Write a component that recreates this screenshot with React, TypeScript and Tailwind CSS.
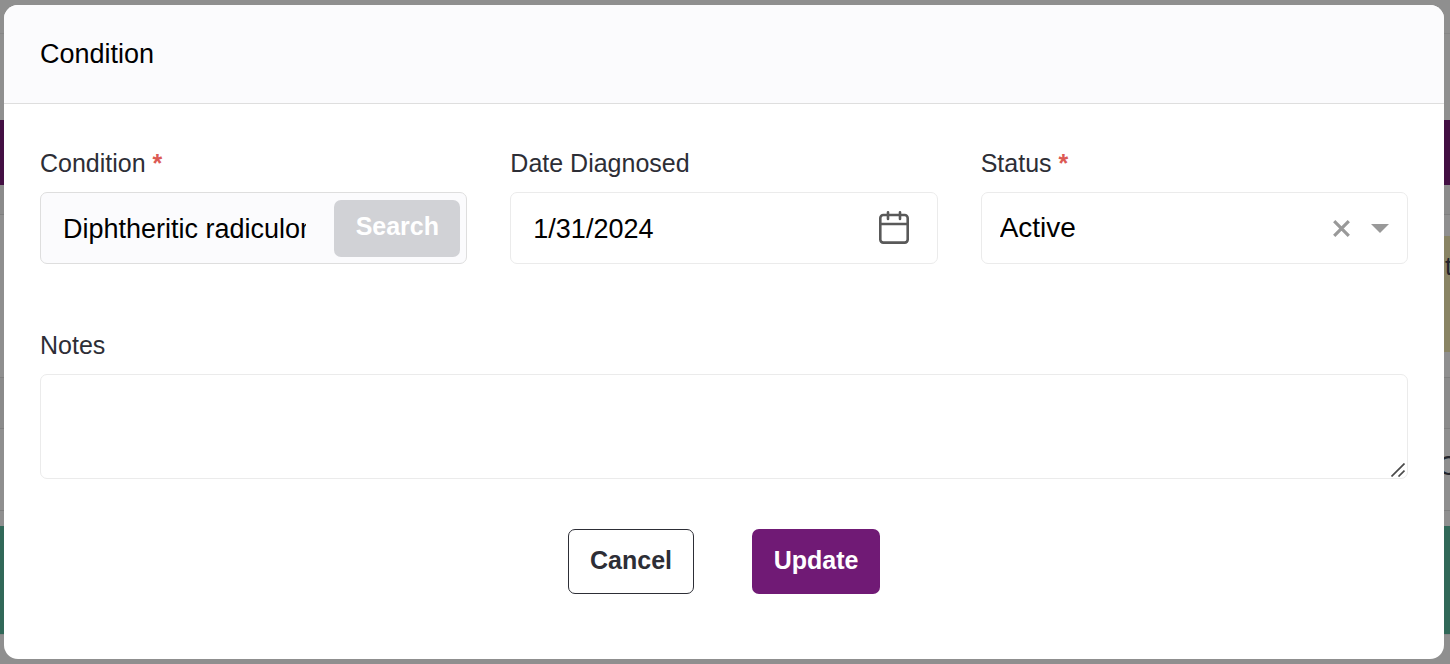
import React, { useState } from 'react';

const CalendarIcon = () => (
  <svg width="30" height="33" viewBox="0 0 30 33" fill="none" stroke="#595959" strokeWidth="2.6" aria-hidden="true">
    <rect x="1.3" y="4" width="27.4" height="27.6" rx="3" />
    <path d="M1 13H29M9 1.3V8M21 1.3V8" strokeLinecap="round" />
  </svg>
);

const ClearIcon = () => (
  <svg width="17" height="17" viewBox="0 0 17 17" fill="none" stroke="#999999" strokeWidth="3.2" aria-hidden="true">
    <path d="M1.2 1.2L15.8 15.8M15.8 1.2L1.2 15.8" />
  </svg>
);

const ArrowIcon = () => (
  <svg width="18" height="9" viewBox="0 0 18 9" fill="#999999" aria-hidden="true">
    <path d="M0 0H18L9 9Z" />
  </svg>
);

const ResizeIcon = () => (
  <svg width="14" height="14" viewBox="0 0 14 14" fill="none" stroke="#4a4a4a" strokeWidth="1.7" aria-hidden="true">
    <path d="M0.5 13.5L13.5 0.5M7.5 13.5L13.5 7.5" />
  </svg>
);

const labelClass = 'block text-[25px] leading-[30px] text-[#2d2e36]';

const Required = () => <span className="font-bold text-[#dc5a54]">*</span>;

// Dimmed page that stays visible around the dialog
const PageBehind = () => (
  <div className="min-h-screen overflow-hidden bg-[#8f8f8f]" aria-hidden="true">
    <div className="h-[34px] border-b border-[#868686]" />
    <div className="h-[86px]" />
    <div className="h-[65px] bg-[#430f43]" />
    <div className="h-[30px] border-b border-[#7f7f7f] bg-[#8b8b8b]" />
    <div className="h-[163px] border-b border-[#7f7f7f] pt-[21px]">
      <div className="ml-4 flex h-[116px] justify-end bg-[#898464] pt-3">
        <span className="-mr-[2px] text-[25px] leading-9 text-[#22232a]">t</span>
      </div>
    </div>
    <div className="h-[51px] border-b border-[#7f7f7f] bg-[#8b8b8b]" />
    <div className="flex h-[82px] items-center justify-end border-b border-[#7f7f7f] pb-2">
      <span className="-mr-2 text-[28px] leading-9 text-[#22232a]">C</span>
    </div>
    <div className="h-[15px]" />
    <div className="h-[108px] bg-[#316858]" />
    <div className="h-[30px] border-t border-[#868686]" />
  </div>
);

const App: React.FC = () => {
  const [condition, setCondition] = useState('Diphtheritic radiculomyelitis');
  const [date, setDate] = useState('1/31/2024');
  const [status, setStatus] = useState('active');
  const [notes, setNotes] = useState('');

  return (
    <div className="relative font-['Liberation_Sans',Arial,sans-serif]">
      <PageBehind />

      <div className="absolute inset-0 py-[5px] pr-[6px] pl-1">
        <div
          role="dialog"
          aria-labelledby="dialog-title"
          className="overflow-hidden rounded-[14px] bg-white"
        >
          {/* Header */}
          <div className="border-b border-[#dedede] bg-[#fbfbfd] px-9 py-[33px]">
            <h2 id="dialog-title" className="text-[27px] leading-8 text-black">
              Condition
            </h2>
          </div>

          <form className="px-9 pt-11 pb-[65px]" onSubmit={(e) => e.preventDefault()}>
            <div className="grid grid-cols-3 gap-[43px]">
              <div>
                <label htmlFor="condition" className={labelClass}>
                  Condition <Required />
                </label>
                <div className="mt-[14px] flex h-[72px] items-center rounded-[7px] border border-[#dedede] bg-[#fbfbfd] pr-[6px] pl-[22px]">
                  <input
                    id="condition"
                    type="text"
                    value={condition}
                    onChange={(e) => setCondition(e.target.value)}
                    className="mr-7 h-full min-w-0 flex-1 bg-transparent pt-[2px] text-[27px] text-black outline-none"
                  />
                  <button
                    type="button"
                    disabled
                    className="h-[57px] w-[126px] rounded-[7px] bg-[#d1d2d6] pb-[2px] text-[25px] font-bold text-white"
                  >
                    Search
                  </button>
                </div>
              </div>

              <div>
                <label htmlFor="date" className={labelClass}>
                  Date Diagnosed
                </label>
                <div className="mt-[14px] flex h-[72px] items-center rounded-[7px] border border-[#ebebeb] bg-white pr-7 pl-[22px]">
                  <input
                    id="date"
                    type="text"
                    value={date}
                    onChange={(e) => setDate(e.target.value)}
                    className="h-full min-w-0 flex-1 bg-transparent pt-[2px] text-[27px] text-black outline-none"
                  />
                  <button type="button" aria-label="Open calendar" className="pb-[2px]">
                    <CalendarIcon />
                  </button>
                </div>
              </div>

              <div>
                <label htmlFor="status" className={labelClass}>
                  Status <Required />
                </label>
                <div className="mt-[14px] flex h-[72px] items-center rounded-[7px] border border-[#ebebeb] bg-white pr-[18px] pl-[18px]">
                  <select
                    id="status"
                    value={status}
                    onChange={(e) => setStatus(e.target.value)}
                    className="h-full min-w-0 flex-1 appearance-none bg-transparent text-[28px] text-black outline-none"
                  >
                    <option value=""></option>
                    <option value="active">Active</option>
                    <option value="inactive">Inactive</option>
                  </select>
                  <button type="button" aria-label="Clear status" className="mr-[21px]" onClick={() => setStatus('')}>
                    <ClearIcon />
                  </button>
                  <ArrowIcon />
                </div>
              </div>
            </div>

            <div className="mt-[66px]">
              <label htmlFor="notes" className={labelClass}>
                Notes
              </label>
              <div className="relative mt-[14px]">
                <textarea
                  id="notes"
                  value={notes}
                  onChange={(e) => setNotes(e.target.value)}
                  className="block h-[105px] w-full resize-none rounded-[7px] border border-[#ebebeb] bg-white px-5 py-4 text-[27px] leading-8 text-black outline-none"
                />
                <span className="pointer-events-none absolute right-[3px] bottom-[2px]">
                  <ResizeIcon />
                </span>
              </div>
            </div>

            {/* Actions */}
            <div className="mt-[50px] flex justify-center gap-[58px]">
              <button
                type="button"
                className="h-[65px] w-[126px] rounded-[7px] border border-[#2d2e36] bg-white pb-[2px] text-[25px] font-bold text-[#2d2e36]"
              >
                Cancel
              </button>
              <button
                type="submit"
                className="h-[65px] w-32 rounded-[7px] bg-[#701a75] pb-[2px] text-[25px] font-bold text-white"
              >
                Update
              </button>
            </div>
          </form>
        </div>
      </div>
    </div>
  );
};

export default App;
